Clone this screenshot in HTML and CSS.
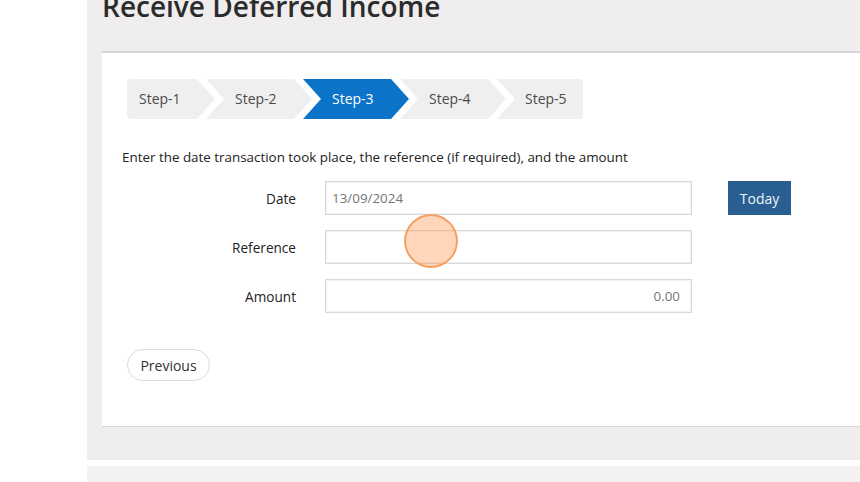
FILE: index.html
```html
<!DOCTYPE html>
<html>
<head>
<meta charset="utf-8">
<link rel="stylesheet" href="styles.css">
</head>
<body>
<div class="page">
  <div class="panel">
    <h1 class="title">Receive Deferred Income</h1>
    <div class="card">
      <div class="steps">
        <div class="step first">Step-1</div>
        <div class="step">Step-2</div>
        <div class="step active">Step-3</div>
        <div class="step">Step-4</div>
        <div class="step last">Step-5</div>
      </div>
      <p class="intro">Enter the date transaction took place, the reference (if required), and the amount</p>
      <div class="form">
        <label class="label">Date</label>
        <div class="input">13/09/2024</div>
        <button class="today">Today</button>
        <label class="label">Reference</label>
        <div class="input"></div>
        <div></div>
        <label class="label">Amount</label>
        <div class="input num">0.00</div>
        <div></div>
      </div>
      <button class="prev">Previous</button>
    </div>
  </div>
  <div class="strip"></div>
</div>
<div class="cursor"></div>
</body>
</html>
```

FILE: styles.css
```css
html, body {
  margin: 0;
  padding: 0;
  background: #ffffff;
  font-family: "Open Sans", "Noto Sans", sans-serif;
  overflow: hidden;
  width: 860px;
  height: 482px;
}
.page {
  margin-left: 87px;
  width: 900px;
}
.panel {
  display: flow-root;
  background: #efeded;
  padding: 0 0 33px 15px;
  height: 427px;
}
.title {
  margin: -11px 0 0 0;
  font-size: 28px;
  font-weight: 600;
  line-height: 34px;
  color: #2b2b2b;
  height: 28px;
  padding-bottom: 0;
}
.card {
  margin-top: 34px;
  background: #ffffff;
  border-top: 2px solid #d3d6dc;
  border-bottom: 1px solid #d6d6d6;
  width: 800px;
  box-sizing: border-box;
  height: 376px;
  padding: 26px 0 0 20px;
}
.steps {
  display: flex;
  margin-left: 5px;
  height: 40px;
}
.step {
  height: 40px;
  width: 106px;
  box-sizing: border-box;
  padding-left: 29px;
  margin-left: -9px;
  background: #efefef;
  color: #4a4a4a;
  font-size: 14px;
  line-height: 40px;
  clip-path: polygon(0 0, calc(100% - 18px) 0, 100% 50%, calc(100% - 18px) 100%, 0 100%, 18px 50%);
}
.step.first {
  margin-left: 0;
  width: 88px;
  padding-left: 12px;
  border-radius: 4px 0 0 4px;
  clip-path: polygon(0 0, calc(100% - 18px) 0, 100% 50%, calc(100% - 18px) 100%, 0 100%);
}
.step.last {
  width: 86px;
  padding-left: 28px;
  border-radius: 0 4px 4px 0;
  clip-path: polygon(0 0, 100% 0, 100% 100%, 0 100%, 18px 50%);
}
.step.active {
  background: #0b73c8;
  color: #ffffff;
}
.intro {
  margin: 28px 0 0 0;
  font-size: 13.4px;
  line-height: 20px;
  color: #222222;
}
.form {
  margin-top: 14px;
  display: grid;
  grid-template-columns: 174px 367px 63px;
  column-gap: 29px;
  row-gap: 15px;
  align-items: center;
}
.form > :nth-child(3n) {
  margin-left: 7px;
}
.label {
  text-align: right;
  font-size: 13.6px;
  color: #222222;
}
.input {
  height: 34px;
  box-sizing: border-box;
  border: 1px solid #d9d9d9;
  box-shadow: inset 0 0 0 0.5px #e6e6e6;
  font-size: 13.4px;
  line-height: 32px;
  padding: 0 11px 0 6px;
  color: #757575;
}
.input.num {
  text-align: right;
}
.today {
  height: 34px;
  width: 63px;
  border: none;
  background: #285f90;
  color: #eef3f8;
  font-family: inherit;
  font-size: 14px;
  padding: 0;
}
.prev {
  display: block;
  margin: 36px 0 0 5px;
  width: 83px;
  height: 32px;
  border: 1px solid #dcdcdc;
  border-radius: 16px;
  background: #ffffff;
  font-family: inherit;
  font-size: 14px;
  color: #333333;
  padding: 0;
}
.strip {
  margin-top: 6px;
  height: 20px;
  background: #f2f2f3;
}
.cursor {
  position: absolute;
  left: 404px;
  top: 214px;
  width: 50px;
  height: 50px;
  border-radius: 50%;
  background: rgba(255, 140, 60, 0.36);
  border: 2px solid rgba(242, 150, 85, 0.85);
}
```
